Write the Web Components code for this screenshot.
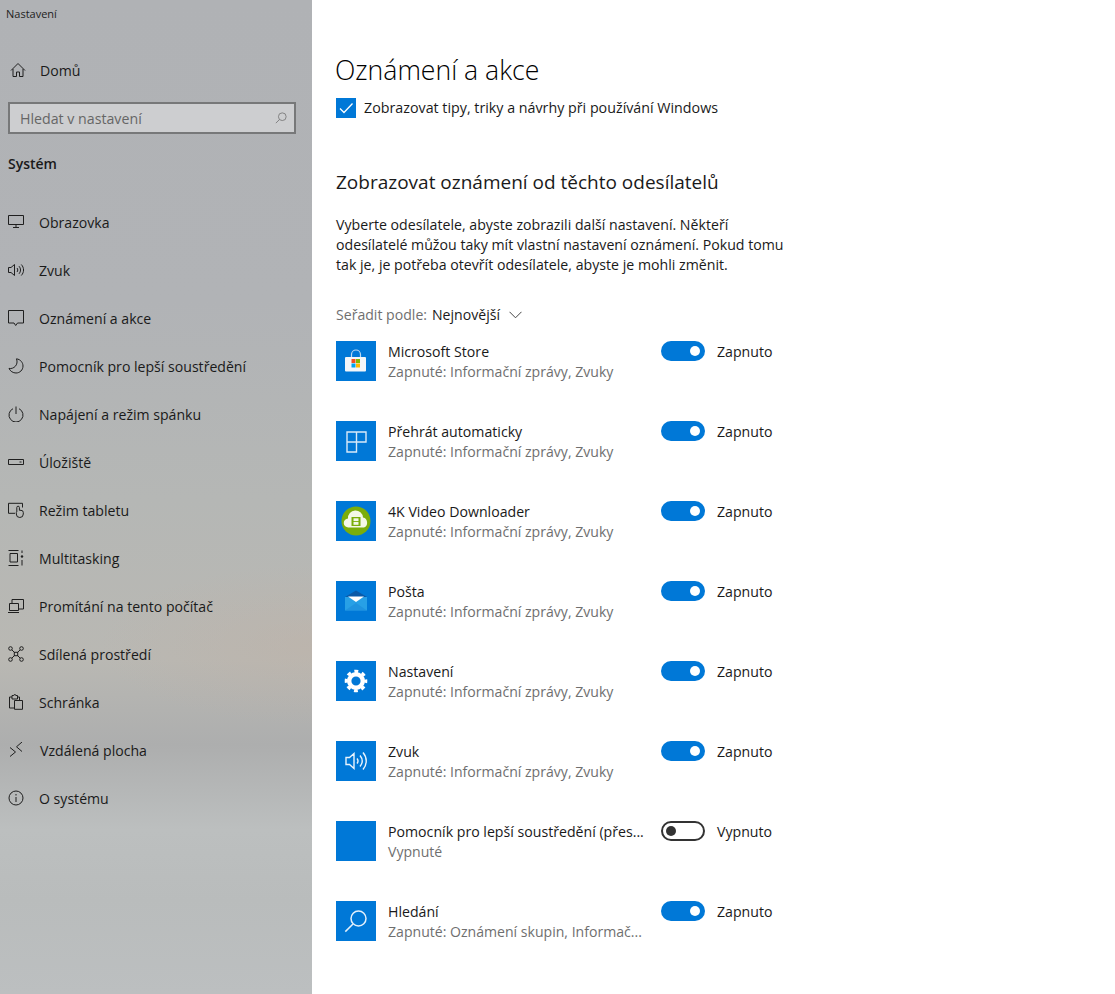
<!DOCTYPE html>
<html lang="cs"><head><meta charset="utf-8"><title>Nastavení</title>
<style>
html,body{margin:0;height:100%;background:#fff}
body{font-family:"Open Sans","Noto Sans",sans-serif;color:#1a1a1a;overflow:hidden}
</style></head>
<body>
<settings-app></settings-app>
<script>
const S='fill="none" stroke="currentColor" stroke-width="1"';
const navIcons={
home:`<svg viewBox="0 0 16 16" ${S}><path d="M1 8.500 8 1.500l7 7M3 7v7.500h3.500V10h3v4.500H13V7"/></svg>`,
display:`<svg viewBox="0 0 16 16" ${S}><path d="M.500 1.500h15v9H.500zM8 10.500v2.500M5 13.500h6"/></svg>`,
sound:`<svg viewBox="0 0 16 16" ${S}><path d="M.500 5.500h2.500L6.500 2.500v11L3 10.500H.500zM9 6c1 1.200 1 2.800 0 4M11 4.200c2 2.300 2 5.300 0 7.600M13.300 2.500c3 3.300 3 7.700 0 11"/></svg>`,
notify:`<svg viewBox="0 0 16 16" ${S}><path d="M.500.500h15v12.500h-6l-1.800 2.500-1.700-2.500H.500z"/></svg>`,
moon:`<svg viewBox="0 0 16 16" ${S}><path d="M8.500.800c4 .600 6.500 3.800 6.500 7.200 0 4-3.200 7-7 7-3 0-5.800-1.800-7-4.600 4.500 1 9.800-3.400 7.500-9.600z"/></svg>`,
power:`<svg viewBox="0 0 16 16" ${S}><path d="M5 2.700a7 7 0 1 0 6 0M8 .500v7.500"/></svg>`,
storage:`<svg viewBox="0 0 16 16" ${S}><path d="M.500 5.500h15v5H.500z"/><path d="M11.500 8h2"/></svg>`,
tablet:`<svg viewBox="0 0 16 16" ${S}><path d="M7 11.300H.500v-10h14V5.500"/><path d="M8.800 10V5.500a1.300 1.300 0 0 1 2.600 0V8.300h1.600a2.300 2.300 0 0 1 2.300 2.300v1.400a3.500 3.500 0 0 1-7 0V10.500z"/></svg>`,
multi:`<svg viewBox="0 0 16 16" ${S}><path d="M.500.500h10M.500 15.500h10M2 3.500h7.500v8.500H2zM14 .500V3M14 10v5.500"/><circle cx="14" cy="6.500" r="1.200" fill="currentColor" stroke="none"/></svg>`,
project:`<svg viewBox="0 0 16 16" ${S}><path d="M4 5V1.500h11.500V11h-5M1.500 5.500h9v7h-9zM0 14.500h11"/></svg>`,
shared:`<svg viewBox="0 0 16 16" ${S}><circle cx="2.500" cy="2.500" r="1.800"/><circle cx="13.500" cy="2.500" r="1.800"/><circle cx="2.500" cy="13.500" r="1.800"/><circle cx="13.500" cy="13.500" r="1.800"/><rect x="6.300" y="6.300" width="3.400" height="3.400"/><path d="M3.800 3.800l2.500 2.500M12.200 3.800 9.700 6.300M3.800 12.200l2.500-2.500M12.200 12.200 9.700 9.700"/></svg>`,
clip:`<svg viewBox="0 0 16 16" ${S}><path d="M6.500 14H1.500V3H4M9.500 3h2v3.500M4 1.500h1.800a1 1 0 0 1 2 0h1.700V5H4zM6.500 6.500h8v8.800h-8z"/></svg>`,
remote:`<svg viewBox="0 0 16 16" ${S}><path d="M2 5.500 7.500 10 2 14.500M14 0 8.500 4.800 14 9.500"/></svg>`,
info:`<svg viewBox="0 0 16 16" ${S}><circle cx="8" cy="8" r="7"/><path d="M8 7v5M8 4v1.500"/></svg>`
};
const appIcons={
store:`<svg viewBox="0 0 40 40"><path d="M15.500 16v-2.500a4.500 4.500 0 0 1 9 0V16" fill="none" stroke="#b9d8f3" stroke-width="1.200"/><rect x="9" y="16" width="21" height="14.500" rx="1" fill="#f3f6f9"/><rect x="15.500" y="18" width="4" height="4" fill="#f25022"/><rect x="20" y="18" width="4" height="4" fill="#7fba00"/><rect x="15.500" y="22.500" width="4" height="4" fill="#00a4ef"/><rect x="20" y="22.500" width="4" height="4" fill="#ffb900"/></svg>`,
auto:`<svg viewBox="0 0 40 40" fill="none" stroke="#d7e9f9" stroke-width="1.400"><path d="M11 11h19v10h-9.500v10H11zM20.500 11v10H11"/></svg>`,
k4:`<svg viewBox="0 0 40 40"><circle cx="20" cy="20" r="14.500" fill="#7bad0b"/><path d="M12.500 26.500a4.500 4.500 0 0 1-.500-9 7.500 7.500 0 0 1 15-1A5.300 5.300 0 0 1 28 26.500z" fill="#f4f8e8"/><rect x="15.500" y="16" width="9" height="9" fill="#7bad0b"/><rect x="17.500" y="17.300" width="5" height="2.800" fill="#f4f8e8"/><rect x="17.500" y="21" width="5" height="2.800" fill="#f4f8e8"/></svg>`,
mail:`<svg viewBox="0 0 40 40"><path d="M9 16 20 9.500 31 16z" fill="#0a5aa8"/><path d="M9 16h22v13.500H9z" fill="#28a0e6"/><path d="M9 29.500 20 22l11 7.500z" fill="#1e8fdc" opacity=".75"/><path d="M12 15.500h16L20 21z" fill="#fff"/></svg>`,
gear:`<svg viewBox="0 0 40 40" fill="none" stroke="#fff"><circle cx="20" cy="20" r="6.800" stroke-width="4.400"/><circle cx="20" cy="20" r="9.800" stroke-width="3" stroke-dasharray="3.900 3.797" stroke-dashoffset="1.950"/></svg>`,
sound:`<svg viewBox="0 0 40 40" fill="none" stroke="#eaf4fc" stroke-width="1.400"><path d="M10 16.500h3.500l4.500-4v15l-4.500-4H10zM21 17.500c1.200 1.500 1.200 3.500 0 5M24 14.500c2.700 3.300 2.700 7.700 0 11M27 11.500c4.300 5 4.300 12 0 17"/></svg>`,
blank:``,
search:`<svg viewBox="0 0 40 40" fill="none" stroke="#e3f0fb" stroke-width="1.500"><circle cx="22.500" cy="17.500" r="7.500"/><path d="M17 23 9.300 30.600"/></svg>`
};
const def=(name,html,cls)=>{customElements.define(name,class extends HTMLElement{
constructor(){super();this.attachShadow({mode:'open'}).innerHTML=html}
connectedCallback(){if(cls)cls(this)}});};

def('nav-item',`<style>
:host{display:flex;align-items:center;height:48px;padding-left:8px;box-sizing:border-box;color:#1a1a1a;font-size:14.100px;white-space:nowrap}
#i{width:16px;height:16px;margin-right:15px;flex:none;color:#1f1f1f;display:block}
#i svg{display:block;width:16px;height:16px}
</style><span id="i"></span><slot></slot>`,el=>{
 el.shadowRoot.getElementById('i').innerHTML=navIcons[el.getAttribute('icon')];
 const o=el.getAttribute('shift'); if(o) el.shadowRoot.getElementById('i').style.cssText=o;
});

def('search-box',`<style>
:host{display:flex;align-items:center;justify-content:space-between;margin:8px 16px 0 8px;height:32px;box-sizing:border-box;border:2px solid #777879;background:#cdced0;padding:0 7px 0 10px;color:#666;font-size:14.200px}
svg{width:12px;height:12px;display:block;color:#777}
</style><slot></slot><svg viewBox="0 0 14 14" fill="none" stroke="currentColor"><circle cx="8.500" cy="5.500" r="4.500"/><path d="M5.300 8.700 1 13"/></svg>`);

def('side-bar',`<style>
:host{display:block;width:312px;flex:none;height:994px;box-sizing:border-box;overflow:hidden;
background:
 radial-gradient(210px 80px at 310px 645px,rgba(192,176,164,.42),rgba(192,176,164,0)),
 linear-gradient(180deg,#b0b2b5 0,#b1b3b6 300px,#b5b7b5 500px,#b9b8b3 660px,#adaeae 745px,#bcbfbf 830px,#b9bcbc 900px,#bcbfc0 994px)}
#t{height:28px;line-height:28px;padding-left:6px;font-size:11px;color:#222}
#h{margin-top:18px}
#s{margin:20px 0 24px 8px;height:20px;line-height:20px;font-size:14px;font-weight:600;color:#1a1a1a}
</style><div id="t">Nastavení</div><div id="h"><slot name="home"></slot></div><slot name="search"></slot><div id="s">Systém</div><slot></slot>`);

def('check-row',`<style>
:host{display:flex;align-items:center;gap:8px;height:20px;margin-top:8px;font-size:14.280px;color:#1a1a1a;white-space:nowrap}
svg{width:20px;height:20px;display:block;flex:none}
#l{display:block;margin-top:-2px}
</style><svg viewBox="0 0 20 20"><rect width="20" height="20" fill="#0078d7"/><path d="M4 10.500 8 14.500 16.500 5.500" fill="none" stroke="#fff" stroke-width="1.300"/></svg><span id="l"><slot></slot></span>`);

def('toggle-switch',`<style>
:host{display:flex;align-items:flex-start;font-size:14.150px;color:#1a1a1a;line-height:20px;white-space:nowrap}
#p{width:44px;height:20px;box-sizing:border-box;border-radius:10px;background:#0078d7;display:flex;align-items:center;justify-content:flex-end;padding:0 5px;margin-right:12px}
#d{width:10px;height:10px;border-radius:50%;background:#fff}
#l{display:block;padding-top:1px}
:host([off]) #p{background:#fff;border:2px solid #333;justify-content:flex-start;padding:0 3px}
:host([off]) #d{background:#333}
</style><div id="p"><div id="d"></div></div><span id="l"><slot></slot></span>`);

def('app-row',`<style>
:host{display:flex;align-items:flex-start;height:40px;margin-bottom:40px;width:450px}
#i{width:40px;height:40px;background:#0078d7;flex:none;margin-right:12px}
#i svg{display:block;width:40px;height:40px}
#x{width:273px;flex:none;line-height:20px;white-space:nowrap;padding-top:1px}
#n{font-size:14.150px;color:#1a1a1a}
#u{font-size:14.080px;color:#6f6f6f}
</style><div id="i"></div><div id="x"><div id="n"><slot name="name"></slot></div><div id="u"><slot name="sub"></slot></div></div><slot></slot>`,el=>{
 el.shadowRoot.getElementById('i').innerHTML=appIcons[el.getAttribute('icon')];
});

def('sort-bar',`<style>
:host{display:flex;align-items:center;height:20px;margin:30px 0 16px;font-size:14.100px;color:#6f6f6f;white-space:nowrap}
::slotted(b){font-weight:400;color:#1a1a1a;margin-left:5px}
#l{display:block;margin-top:-2px}
svg{width:13px;height:8px;margin-left:9px;display:block}
</style><span id="l"><slot></slot></span><svg viewBox="0 0 13 8" fill="none" stroke="#444" stroke-width="1"><path d="M.500.800 6.500 6.800 12.500.800"/></svg>`);

def('main-pane',`<style>
:host{display:block;flex:1;box-sizing:border-box;padding:50px 0 0 24px;background:#fff;height:994px;overflow:hidden;color:#1a1a1a}
#t{font-size:26.600px;font-weight:300;line-height:40px;margin-left:-1px;color:#000;white-space:nowrap}
#h{font-size:19px;line-height:28px;margin-top:50px;color:#1a1a1a;white-space:nowrap}
#p{font-size:14.160px;line-height:20px;margin-top:19px;white-space:nowrap;color:#1a1a1a}
</style><div id="t">Oznámení a akce</div><slot name="check"></slot><div id="h">Zobrazovat oznámení od těchto odesílatelů</div><div id="p">Vyberte odesílatele, abyste zobrazili další nastavení. Někteří<br>odesílatelé můžou taky mít vlastní nastavení oznámení. Pokud tomu<br>tak je, je potřeba otevřít odesílatele, abyste je mohli změnit.</div><slot name="sort"></slot><slot></slot>`);

def('settings-app',`<style>:host{display:flex;width:1115px;height:994px}</style>
<side-bar>
 <nav-item slot="home" icon="home" shift="margin-left:2px;margin-right:14px">Domů</nav-item>
 <search-box slot="search">Hledat v nastavení</search-box>
 <nav-item icon="display">Obrazovka</nav-item>
 <nav-item icon="sound">Zvuk</nav-item>
 <nav-item icon="notify">Oznámení a akce</nav-item>
 <nav-item icon="moon">Pomocník pro lepší soustředění</nav-item>
 <nav-item icon="power">Napájení a režim spánku</nav-item>
 <nav-item icon="storage">Úložiště</nav-item>
 <nav-item icon="tablet">Režim tabletu</nav-item>
 <nav-item icon="multi">Multitasking</nav-item>
 <nav-item icon="project">Promítání na tento počítač</nav-item>
 <nav-item icon="shared">Sdílená prostředí</nav-item>
 <nav-item icon="clip">Schránka</nav-item>
 <nav-item icon="remote" shift="margin-right:16px">Vzdálená plocha</nav-item>
 <nav-item icon="info">O systému</nav-item>
</side-bar>
<main-pane>
 <check-row slot="check">Zobrazovat tipy, triky a návrhy při používání Windows</check-row>
 <sort-bar slot="sort">Seřadit podle:<b>Nejnovější</b></sort-bar>
 <app-row icon="store"><span slot="name">Microsoft Store</span><span slot="sub">Zapnuté: Informační zprávy, Zvuky</span><toggle-switch>Zapnuto</toggle-switch></app-row>
 <app-row icon="auto"><span slot="name">Přehrát automaticky</span><span slot="sub">Zapnuté: Informační zprávy, Zvuky</span><toggle-switch>Zapnuto</toggle-switch></app-row>
 <app-row icon="k4"><span slot="name">4K Video Downloader</span><span slot="sub">Zapnuté: Informační zprávy, Zvuky</span><toggle-switch>Zapnuto</toggle-switch></app-row>
 <app-row icon="mail"><span slot="name">Pošta</span><span slot="sub">Zapnuté: Informační zprávy, Zvuky</span><toggle-switch>Zapnuto</toggle-switch></app-row>
 <app-row icon="gear"><span slot="name">Nastavení</span><span slot="sub">Zapnuté: Informační zprávy, Zvuky</span><toggle-switch>Zapnuto</toggle-switch></app-row>
 <app-row icon="sound"><span slot="name">Zvuk</span><span slot="sub">Zapnuté: Informační zprávy, Zvuky</span><toggle-switch>Zapnuto</toggle-switch></app-row>
 <app-row icon="blank"><span slot="name">Pomocník pro lepší soustředění (přes...</span><span slot="sub">Vypnuté</span><toggle-switch off>Vypnuto</toggle-switch></app-row>
 <app-row icon="search"><span slot="name">Hledání</span><span slot="sub">Zapnuté: Oznámení skupin, Informač...</span><toggle-switch>Zapnuto</toggle-switch></app-row>
</main-pane>`);
</script>
</body></html>
